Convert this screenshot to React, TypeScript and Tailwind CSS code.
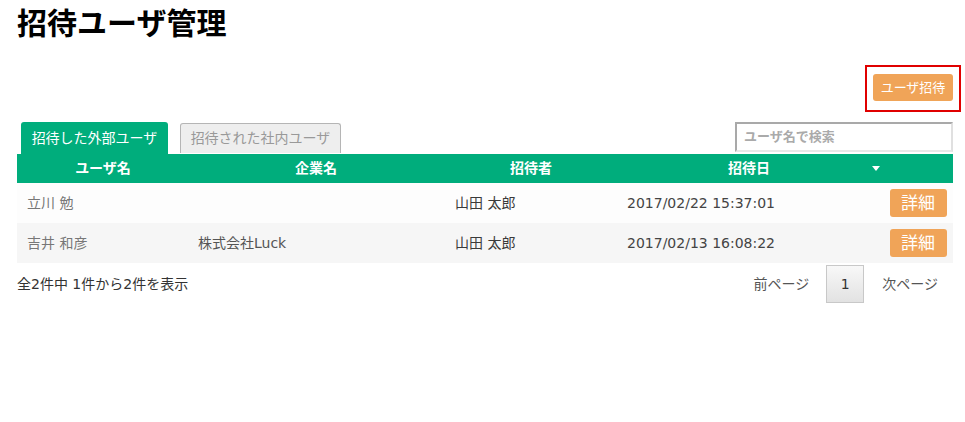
import React from 'react';

const rows = [
  { name: '立川 勉', company: '', inviter: '山田 太郎', date: '2017/02/22 15:37:01' },
  { name: '吉井 和彦', company: '株式会社Luck', inviter: '山田 太郎', date: '2017/02/13 16:08:22' },
];

const font = { fontFamily: '"DejaVu Sans", "Noto Sans CJK JP", sans-serif' };

export default function App() {
  return (
    <div className="min-h-[422px] bg-white pl-[17px] pr-[12px]" style={font}>
      <h1 className="pt-[1px] text-[30px] font-bold leading-[45px] text-black">招待ユーザ管理</h1>

      <div className="mt-[19px] flex justify-end">
        <div className="-mr-[8px] border-2 border-[#e00000] pl-[6px] pr-[6px] pt-[7px] pb-[9px]">
          <button className="h-[27px] w-[80px] rounded-[3px] bg-[#f0a458] text-[13px] leading-[27px] text-white">
            ユーザ招待
          </button>
        </div>
      </div>

      <div className="mt-[10px] flex items-end justify-between">
        <div className="flex items-end pl-[4px]">
          <div className="h-[32px] w-[147px] rounded-t-[3px] bg-[#00ad7c] text-center text-[14px] leading-[32px] text-white">
            招待した外部ユーザ
          </div>
          <div className="ml-[12px] mb-[1px] h-[30px] w-[161px] rounded-t-[3px] border border-b-0 border-[#b5b5b5] bg-[#eeeeee] text-center text-[14px] leading-[29px] text-[#999]">
            招待された社内ユーザ
          </div>
        </div>
        <div className="mb-[2px] h-[30px] w-[218px] border-2 border-[#a9a9a9] border-b-[#e8e8e8] border-r-[#e0e0e0] bg-white pl-[7px] text-[13px] font-bold leading-[26px] text-[#aaa]">
          ユーザ名で検索
        </div>
      </div>

      <div className="grid grid-cols-[172px_254px_176px_260px_74px] bg-[#00ad7c] text-[14px] font-bold leading-[29px] text-white">
        <div className="text-center">ユーザ名</div>
        <div className="text-center">企業名</div>
        <div className="text-center">招待者</div>
        <div className="relative text-center">
          招待日
          <span className="absolute right-[-1px] top-[12px] h-0 w-0 border-x-[4px] border-t-[5px] border-x-transparent border-t-white" />
        </div>
        <div />
      </div>

      {rows.map((r, i) => (
        <div
          key={i}
          className={`grid h-[40px] grid-cols-[172px_254px_176px_260px_74px] items-center text-[14px] ${
            i % 2 === 0 ? 'bg-[#fdfdfd]' : 'bg-[#f6f6f6]'
          }`}
        >
          <div className="pl-[10px] text-[#777]">{r.name}</div>
          <div className="pl-[9px] text-[#555]">{r.company}</div>
          <div className="pl-[12px] text-[#3a3a3a]">{r.inviter}</div>
          <div className="pl-[8px] text-[#444]">{r.date}</div>
          <div className="flex justify-center pl-[4px]">
            <button className="h-[28px] w-[57px] rounded-[3px] bg-[#f0a458] text-[17px] leading-[28px] text-white">
              詳細
            </button>
          </div>
        </div>
      ))}

      <div className="mt-[2px] flex items-center justify-between">
        <div className="text-[14px] text-[#333]">全2件中 1件から2件を表示</div>
        <div className="flex items-center text-[14px] text-[#555]">
          <span className="mr-[17px]">前ページ</span>
          <span className="flex h-[38px] w-[38px] items-center justify-center border border-[#c8c8c8] bg-gradient-to-b from-[#f8f8f8] to-[#e2e2e2] text-[#333]">
            1
          </span>
          <span className="ml-[18px] mr-[15px]">次ページ</span>
        </div>
      </div>
    </div>
  );
}
